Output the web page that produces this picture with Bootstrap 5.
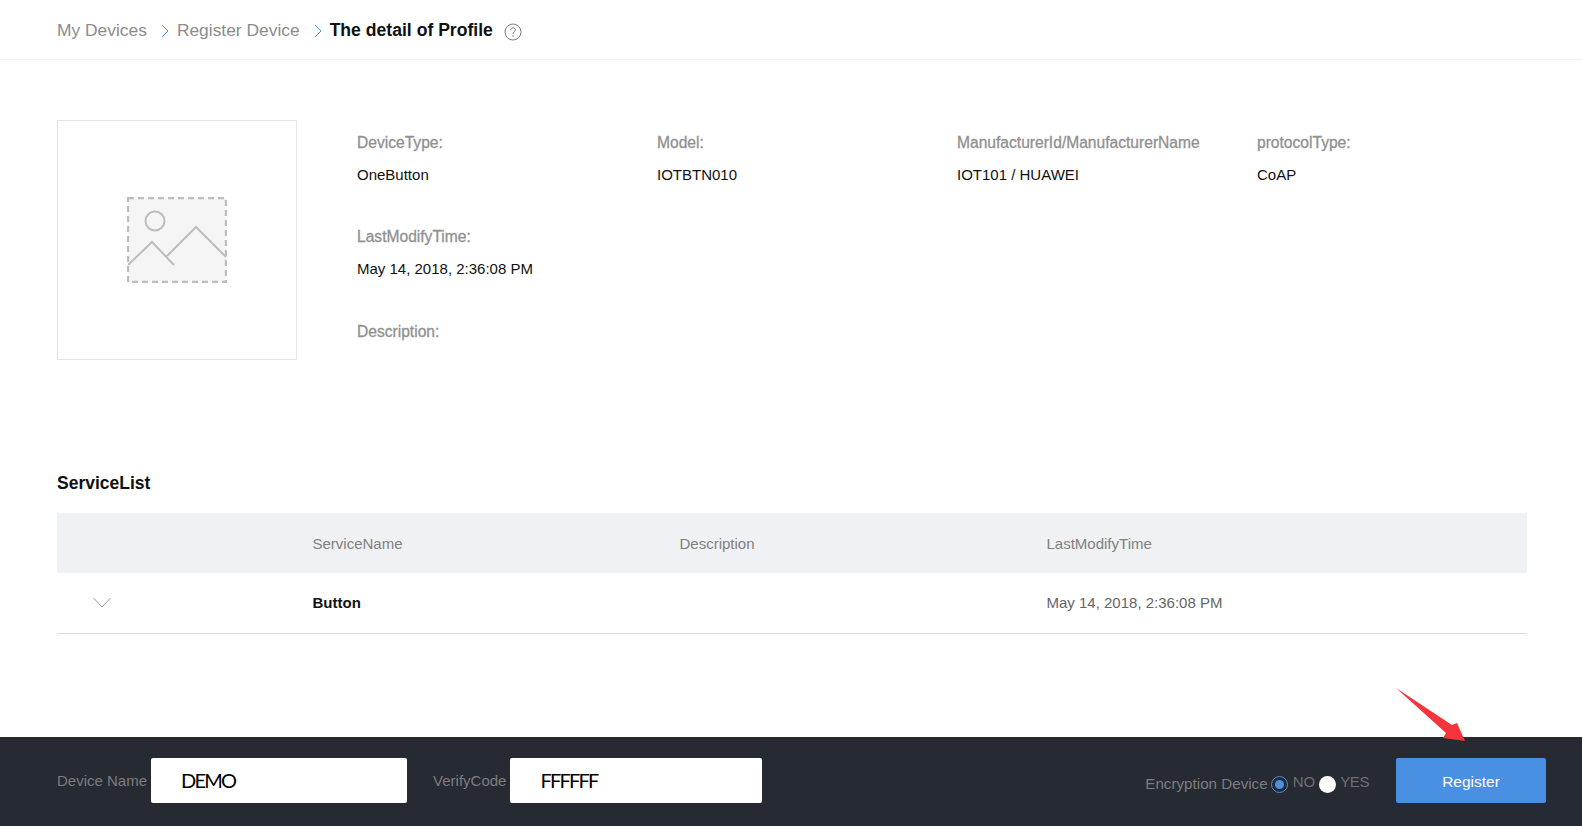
<!DOCTYPE html>
<html>
  <head>
    <title>The detail of Profile</title>
    <link href="https://cdn.jsdelivr.net/npm/bootstrap@5.3.3/dist/css/bootstrap.min.css" rel="stylesheet">
    <style>
      body {
        font-family: "Liberation Sans", Arial, sans-serif;
        font-size: 15px;
        color: #000;
        background: #fff;
        height: 826px;
        overflow: hidden;
      }
      /* breadcrumb header */
      .top-bar {
        height: 60px;
        padding: 2px 0 0 57px;
        border-bottom: 1px solid #f0f0f0;
        font-size: 17.4px;
      }
      .crumb-link { color: #8c8c8c; }
      .crumb-sep { margin: 0 8px 0 14px; }
      .crumb-now { font-weight: 700; font-size: 17.6px; color: #111; }
      .help-icon { margin-left: 11px; margin-top: 2px; }

      /* profile summary */
      .profile-area {
        padding: 60px 55px 0 57px;
        height: 406px;
      }
      .thumb-box {
        width: 240px;
        height: 240px;
        border: 1px solid #e4e4e4;
        margin-right: 60px;
        flex-shrink: 0;
      }
      .info-grid {
        display: grid;
        grid-template-columns: repeat(4, 300px);
        grid-auto-rows: 94px;
        padding-top: 14px;
      }
      .info-label { color: #909090; font-size: 15.6px; line-height: 18px; -webkit-text-stroke: 0.3px #909090; }
      .info-value { margin-top: 14px; line-height: 18px; color: #111; }
      .last-label { padding-top: 1px; }

      /* service table */
      .service-area { padding: 0 55px 0 57px; }
      .service-title { font-size: 17.5px; font-weight: 700; line-height: 20px; margin: 0 0 20px; padding-top: 7px; color: #111; }
      .service-table { table-layout: fixed; width: 100%; margin: 0; }
      .service-table th {
        background: #f0f1f5;
        color: #808080;
        font-weight: 400;
        height: 60px;
        padding: 2px 0 0;
        vertical-align: middle;
        border: 0;
      }
      .service-table td {
        height: 60px;
        padding: 0;
        vertical-align: middle;
        border-bottom: 1px solid #dcdcdc;
      }
      .col-toggle { width: 255.5px; }
      .col-name { width: 367px; }
      .col-desc { width: 367px; }
      .service-table td.toggle-cell { padding: 0 0 3px 36px; }
      .service-name { font-weight: 700; color: #111; }
      .service-time { color: #666; }

      /* bottom register bar */
      .register-bar {
        position: relative;
        height: 89px;
        background: #252a33;
        padding: 0 36px 2px 57px;
        color: #7d7d7d;
        margin-top: 103px;
      }
      .bar-label { margin: 3px 4px 0 0; white-space: nowrap; }
      .bar-input {
        height: 45px;
        border: 0;
        border-radius: 2px;
        background: #fff;
        padding: 0 30px;
        font-family: "Lato", sans-serif;
        font-size: 20px;
        letter-spacing: -1.8px;
        color: #000;
      }
      .name-input { width: 256px; margin-right: 26px; }
      .code-input { width: 252px; }
      .encrypt-label { margin-top: 9px; font-size: 15.2px; }
      .radio-dot {
        display: inline-block;
        width: 17px;
        height: 17px;
        border-radius: 50%;
        background: #fff;
        margin: 9px 4px 0 4px;
      }
      .radio-on {
        border: 1px solid #4a90e2;
        padding: 3px;
        background-clip: content-box;
        background-color: #4a90e2;
        margin-left: 3px;
        margin-right: 5px;
      }
      .radio-text { margin-top: 5px; color: #6f6f6f; }
      .text-yes { letter-spacing: -0.4px; }
      .register-btn {
        width: 150px;
        height: 45px;
        border: 0;
        border-radius: 2px;
        background: #4a90e2;
        color: #fff;
        font-size: 15.5px;
        padding-top: 4px;
        margin-left: 27px;
      }
      .red-arrow { position: absolute; left: 1394px; top: -51px; }
    </style>
    <script src="https://cdn.jsdelivr.net/npm/bootstrap@5.3.3/dist/js/bootstrap.bundle.min.js"></script>
  </head>
  <body>
    <!-- Breadcrumb -->
    <div class="top-bar d-flex align-items-center">
      <span class="crumb-link">My Devices</span>
      <svg class="crumb-sep" width="8" height="14" viewBox="0 0 8 14"><path d="M1 1l6 6-6 6" fill="none" stroke="#4a90e2" stroke-width="1"/></svg>
      <span class="crumb-link">Register Device</span>
      <svg class="crumb-sep" width="8" height="14" viewBox="0 0 8 14"><path d="M1 1l6 6-6 6" fill="none" stroke="#4a90e2" stroke-width="1"/></svg>
      <span class="crumb-now">The detail of Profile</span>
      <svg class="help-icon" width="18" height="18" viewBox="0 0 18 18">
        <circle cx="9" cy="9" r="8" fill="none" stroke="#808080"/>
        <path d="M6.600 7.200c0-1.500 1.100-2.400 2.400-2.400s2.400.9 2.400 2.200c0 1.800-2.400 1.900-2.400 3.900" fill="none" stroke="#808080"/>
        <circle cx="9" cy="13" r=".8" fill="#808080"/>
      </svg>
    </div>

    <!-- Profile summary -->
    <div class="profile-area d-flex">
      <div class="thumb-box d-flex align-items-center justify-content-center">
        <svg width="100" height="86" viewBox="0 0 100 86">
          <rect x="1" y="1" width="98" height="84" fill="#f5f5f5" stroke="#bdbdbd" stroke-width="2.400" stroke-dasharray="6 4"/>
          <circle cx="28" cy="24" r="9.500" fill="none" stroke="#bdbdbd" stroke-width="2"/>
          <path d="M1 68l24-23 22 23M39 60l30-30 30 30" fill="none" stroke="#bdbdbd" stroke-width="2"/>
        </svg>
      </div>
      <div class="info-grid">
        <div><div class="info-label">DeviceType:</div><div class="info-value">OneButton</div></div>
        <div><div class="info-label">Model:</div><div class="info-value">IOTBTN010</div></div>
        <div><div class="info-label">ManufacturerId/ManufacturerName</div><div class="info-value">IOT101 / HUAWEI</div></div>
        <div><div class="info-label">protocolType:</div><div class="info-value">CoAP</div></div>
        <div><div class="info-label">LastModifyTime:</div><div class="info-value">May 14, 2018, 2:36:08 PM</div></div>
        <div></div><div></div><div></div>
        <div><div class="info-label last-label">Description:</div></div>
      </div>
    </div>

    <!-- Service list -->
    <div class="service-area">
      <h2 class="service-title">ServiceList</h2>
      <table class="table service-table">
        <thead>
          <tr>
            <th class="col-toggle"></th>
            <th class="col-name">ServiceName</th>
            <th class="col-desc">Description</th>
            <th>LastModifyTime</th>
          </tr>
        </thead>
        <tbody>
          <tr>
            <td class="toggle-cell">
              <svg width="18" height="11" viewBox="0 0 18 11"><path d="M.5 1l8.500 9 8.500-9" fill="none" stroke="#999"/></svg>
            </td>
            <td class="service-name">Button</td>
            <td></td>
            <td class="service-time">May 14, 2018, 2:36:08 PM</td>
          </tr>
        </tbody>
      </table>
    </div>

    <!-- Register bar -->
    <div class="register-bar d-flex align-items-center">
      <span class="bar-label">Device Name</span>
      <input class="bar-input name-input" type="text" value="DEMO">
      <span class="bar-label">VerifyCode</span>
      <input class="bar-input code-input" type="text" value="FFFFFF">
      <div class="d-flex align-items-center ms-auto">
        <span class="encrypt-label">Encryption Device</span>
        <span class="radio-dot radio-on"></span>
        <span class="radio-text">NO</span>
        <span class="radio-dot"></span>
        <span class="radio-text text-yes">YES</span>
        <button class="register-btn" type="button">Register</button>
      </div>
      <svg class="red-arrow" width="76" height="58" viewBox="0 0 76 58">
        <path d="M2 2L58 39l5-2 8 18-22-3 3-5z" fill="#f5353b"/>
      </svg>
    </div>
  </body>
</html>
